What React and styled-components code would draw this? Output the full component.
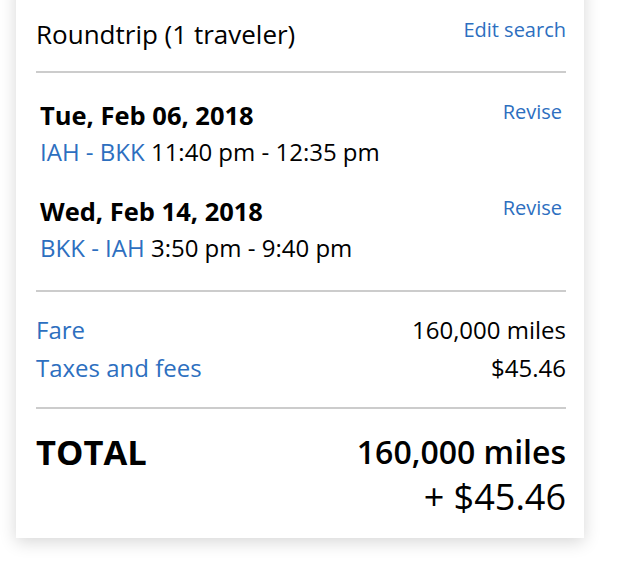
import React from "react";
import styled, { createGlobalStyle } from "styled-components";

const Global = createGlobalStyle`
  html, body { margin: 0; padding: 0; background: #fff; }
  body { font-family: "Open Sans", "Liberation Sans", sans-serif; color: #000; }
`;

const Page = styled.div`
  width: 626px;
  height: 572px;
  overflow: hidden;
  padding-left: 16px;
  box-sizing: border-box;
`;

const Card = styled.div`
  width: 568px;
  margin-top: -20px;
  padding: 20px 18px 19px 20px;
  box-sizing: border-box;
  background: #fff;
  box-shadow: 0 4px 16px rgba(0, 0, 0, 0.16);
`;

const Section = styled.div`
  padding: ${(p) => p.$pad || "0"};
  border-bottom: ${(p) => (p.$last ? "none" : "2px solid #cccccc")};
`;

const Row = styled.div`
  display: flex;
  justify-content: space-between;
  align-items: ${(p) => p.$align || "baseline"};
`;

const Title = styled.div`
  font-size: 26px;
  line-height: 32px;
`;

const Link = styled.a`
  color: #2d6fbf;
  font-size: ${(p) => p.$size || "20px"};
  line-height: ${(p) => p.$lh || "28px"};
  text-decoration: none;
  cursor: pointer;
`;

const Trip = styled.div`
  padding: 0 4px;
  & + & { margin-top: 25px; }
`;

const DateText = styled.div`
  font-size: 25.5px;
  font-weight: 700;
  line-height: 34px;
`;

const Route = styled.div`
  margin-top: 3px;
  font-size: 24px;
  line-height: 34px;
`;

const Blue = styled.span`
  color: #2d6fbf;
`;

const Value = styled.div`
  font-size: 24px;
  line-height: 38px;
`;

const TotalLabel = styled.div`
  font-size: 34.5px;
  font-weight: 700;
  line-height: 46px;
`;

const TotalValues = styled.div`
  text-align: right;
`;

const Miles = styled.div`
  font-size: 32px;
  font-weight: 600;
  line-height: 46px;
`;

const Cash = styled.div`
  font-size: 36px;
  line-height: 44px;
`;

function TripBlock({ date, route, times }) {
  return (
    <Trip>
      <Row $align="flex-start">
        <DateText>{date}</DateText>
        <Link $size="20px" $lh="27px">Revise</Link>
      </Row>
      <Route>
        <Blue>{route}</Blue> {times}
      </Route>
    </Trip>
  );
}

export default function App() {
  return (
    <Page>
      <Global />
      <Card>
        <Section $pad="18px 0 21px">
          <Row $align="flex-start">
            <Title>Roundtrip (1 traveler)</Title>
            <Link $size="20px" $lh="24px">Edit search</Link>
          </Row>
        </Section>
        <Section $pad="25px 0 25px">
          <TripBlock date="Tue, Feb 06, 2018" route="IAH - BKK" times="11:40 pm - 12:35 pm" />
          <TripBlock date="Wed, Feb 14, 2018" route="BKK - IAH" times="3:50 pm - 9:40 pm" />
        </Section>
        <Section $pad="19px 0 20px">
          <Row>
            <Link $size="24px" $lh="38px">Fare</Link>
            <Value>160,000 miles</Value>
          </Row>
          <Row>
            <Link $size="24px" $lh="38px">Taxes and fees</Link>
            <Value>$45.46</Value>
          </Row>
        </Section>
        <Section $pad="20px 0 0" $last>
          <Row $align="flex-start">
            <TotalLabel>TOTAL</TotalLabel>
            <TotalValues>
              <Miles>160,000 miles</Miles>
              <Cash>+ $45.46</Cash>
            </TotalValues>
          </Row>
        </Section>
      </Card>
    </Page>
  );
}
